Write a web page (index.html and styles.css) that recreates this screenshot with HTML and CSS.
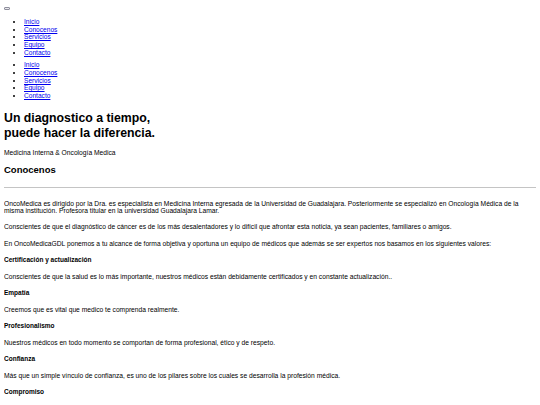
FILE: index.html
```html
<!DOCTYPE html>
<html lang="es">
<head>
<meta charset="utf-8">
<title>OncoMedica</title>
<link rel="stylesheet" href="styles.css">
</head>
<body>
<header class="site-header">
  <button class="nav-toggle" type="button" aria-label="Menú"></button>
  <ul class="nav nav-mobile">
    <li><a href="#">Inicio</a></li>
    <li><a href="#">Conocenos</a></li>
    <li><a href="#">Servicios</a></li>
    <li><a href="#">Equipo</a></li>
    <li><a href="#">Contacto</a></li>
  </ul>
  <ul class="nav nav-desktop">
    <li><a href="#">Inicio</a></li>
    <li><a href="#">Conocenos</a></li>
    <li><a href="#">Servicios</a></li>
    <li><a href="#">Equipo</a></li>
    <li><a href="#">Contacto</a></li>
  </ul>
</header>
<section class="hero">
  <h1 class="hero-title">Un diagnostico a tiempo,<br>puede hacer la diferencia.</h1>
  <p class="hero-sub">Medicina Interna &amp; Oncología Medica</p>
</section>
<section class="about">
  <h2 class="about-title">Conocenos</h2>
  <hr class="divider">
  <p class="text first">OncoMedica es dirigido por la Dra. es especialista en Medicina Interna egresada de la Universidad de Guadalajara. Posteriormente se especializó en Oncología Médica de la misma institución. Profesora titular en la universidad Guadalajara Lamar.</p>
  <p class="text">Conscientes de que el diagnóstico de cáncer es de los más desalentadores y lo difícil que afrontar esta noticia, ya sean pacientes, familiares o amigos.</p>
  <p class="text">En OncoMedicaGDL ponemos a tu alcance de forma objetiva y oportuna un equipo de médicos que además se ser expertos nos basamos en los siguientes valores:</p>
  <h4 class="value">Certificación y actualización</h4>
  <p class="text">Conscientes de que la salud es lo más importante, nuestros médicos están debidamente certificados y en constante actualización..</p>
  <h4 class="value">Empatía</h4>
  <p class="text">Creemos que es vital que medico te comprenda realmente.</p>
  <h4 class="value">Profesionalismo</h4>
  <p class="text">Nuestros médicos en todo momento se comportan de forma profesional, ético y de respeto.</p>
  <h4 class="value">Confianza</h4>
  <p class="text">Más que un simple vínculo de confianza, es uno de los pilares sobre los cuales se desarrolla la profesión médica.</p>
  <h4 class="value">Compromiso</h4>
</section>
</body>
</html>
```
FILE: styles.css
```css
html, body {
  background: #ffffff;
}
body {
  margin: 4px;
  font-family: "Liberation Sans", Arial, sans-serif;
  font-size: 6.7px;
  line-height: 7.4px;
  color: #000000;
}
.site-header {
  display: flow-root;
}
.nav-toggle {
  display: block;
  margin: 3px 0 0 0;
  padding: 0;
  width: 6px;
  height: 3px;
  border: 0.5px solid #8f8f9d;
  border-radius: 1px;
  background: #e9e9ed;
}
.nav {
  padding-left: 20px;
  list-style: disc;
  font-size: 6.6px;
  line-height: 7.67px;
}
.nav-mobile {
  margin: 8px 0 5px 0;
}
.nav-desktop {
  margin: 0 0 6.5px 0;
}
.nav a {
  color: #0000ee;
  text-decoration: underline;
}
.hero-title {
  margin: 4.8px 0 0 0;
  font-size: 12.3px;
  line-height: 15px;
  font-weight: bold;
}
.hero-sub {
  margin: 8px 0 0 0;
}
.about-title {
  margin: 7.7px 0 0 0;
  font-size: 9.5px;
  line-height: 11.2px;
  font-weight: bold;
}
.divider {
  margin: 12px 0 0 0;
  border: 0;
  border-top: 1px solid #c4c4c4;
  height: 0;
}
.text, .value {
  margin: 9.1px 0 0 0;
}
.text.first {
  margin-top: 12px;
  line-height: 7px;
}
.value {
  font-size: 6.5px;
  font-weight: bold;
}
```
